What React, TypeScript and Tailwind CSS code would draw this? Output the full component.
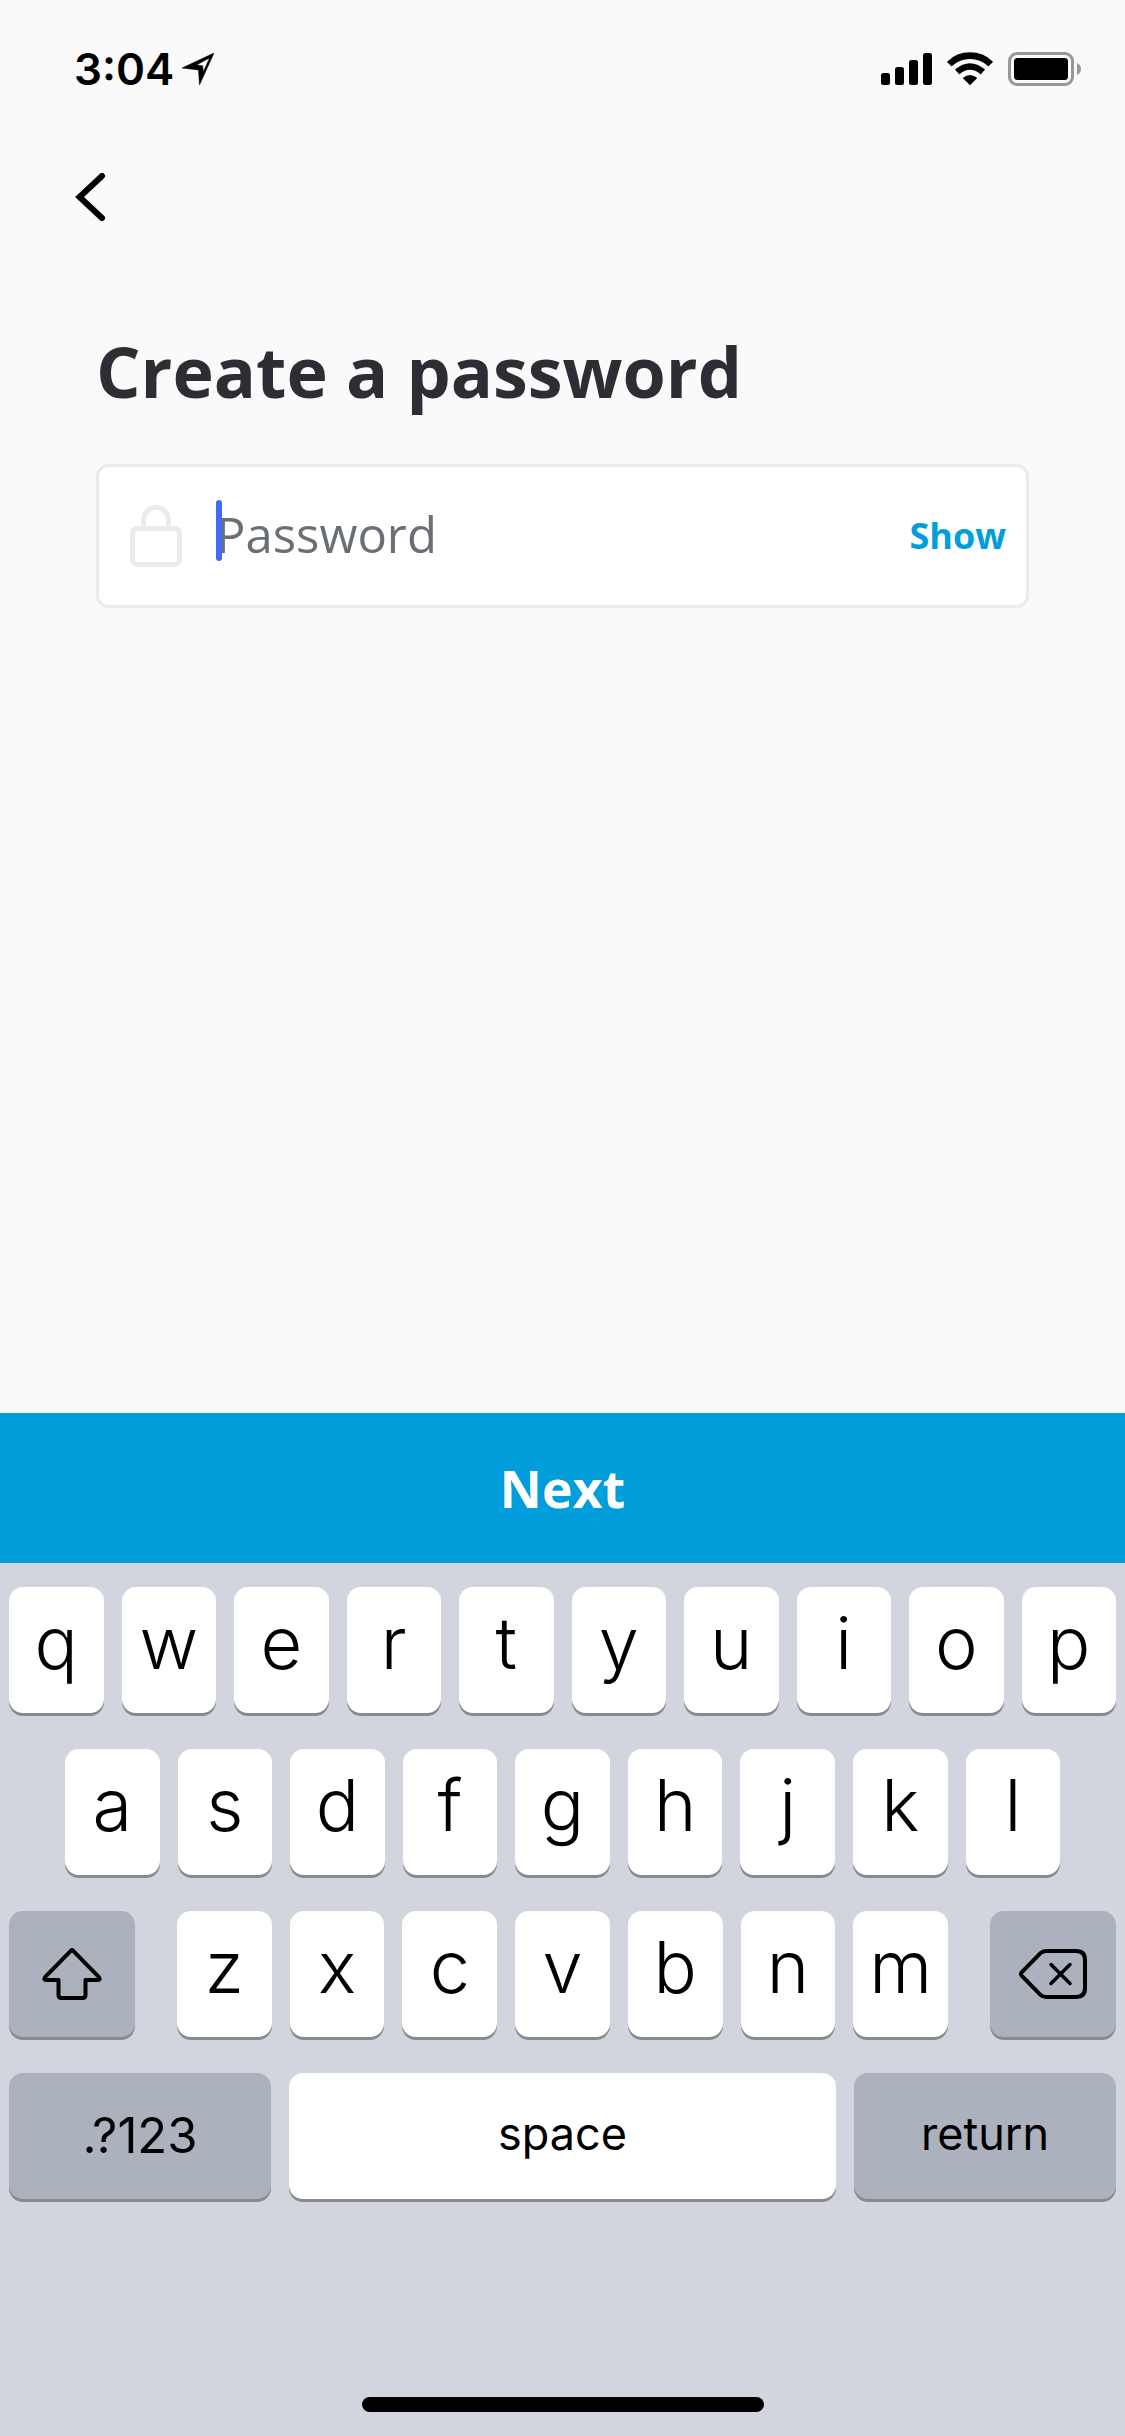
import { useState } from "react";
import type { ReactNode } from "react";

function LocationArrow() {
  return (
    <svg className="h-8 w-8" viewBox="0 0 32 32" aria-hidden="true">
      <path
        fillRule="evenodd"
        d="M32 0L17.5 32L16.5 17L0 15ZM27.5 5L14.5 12L20.5 12.7L21.5 18.5Z"
        fill="#000"
        stroke="#000"
        strokeWidth="0.5"
      />
    </svg>
  );
}

function SignalBars() {
  return (
    <svg className="h-9 w-[51px]" viewBox="0 0 51 36" aria-hidden="true">
      <rect x="0" y="22" width="9" height="12" rx="2.5" />
      <rect x="14" y="16" width="9" height="18" rx="2.5" />
      <rect x="28" y="9" width="9" height="25" rx="2.5" />
      <rect x="42" y="2" width="9" height="32" rx="2.5" />
    </svg>
  );
}

function Wifi() {
  return (
    <svg className="h-9 w-[46px]" viewBox="0 0 46 36" aria-hidden="true">
      <path d="M23 34.2L16.2 27.4Q15.9 27 16.3 26.6Q23 21.4 29.7 26.6Q30.1 27 29.8 27.4Z" />
      <path d="M8.3 19Q7.9 18.6 8.3 18.2Q23 6.2 37.7 18.2Q38.1 18.6 37.7 19L34 22.9Q33.6 23.3 33.2 23Q23 14.6 12.8 23Q12.4 23.3 12 22.9Z" />
      <path d="M0.3 11.2Q-0.1 10.8 0.3 10.4Q9.5 1.2 23 1.2Q36.5 1.2 45.7 10.4Q46.1 10.8 45.7 11.2L41.8 15Q41.4 15.4 41 15Q33.3 7.9 23 7.9Q12.7 7.9 5 15Q4.6 15.4 4.2 15Z" />
    </svg>
  );
}

function Battery() {
  return (
    <svg className="h-9 w-[74px]" viewBox="0 0 74 36" aria-hidden="true">
      <rect x="1.5" y="2.5" width="63" height="31" rx="7.5" fill="none" stroke="#979797" strokeWidth="3" />
      <rect x="6" y="7" width="54" height="22" rx="3.5" />
      <path d="M69 12Q73 14 73 18Q73 22 69 24Z" fill="#979797" />
    </svg>
  );
}

function Lock() {
  return (
    <svg className="h-[62px] w-[52px] shrink-0" viewBox="0 0 52 62" fill="none" stroke="#e8ecec" strokeWidth="5" aria-hidden="true">
      <rect x="2.5" y="23.5" width="47" height="36" rx="5" />
      <path d="M13.5 23.5V16C13.5 7.5 19 2.5 26 2.5S38.5 7.5 38.5 16V23.5" />
    </svg>
  );
}

function Shift() {
  return (
    <svg className="h-[52px] w-[60px]" viewBox="0 0 60 52" fill="none" stroke="#000" strokeWidth="4" strokeLinejoin="round" aria-hidden="true">
      <path d="M28.8 2.8Q30 1.6 31.2 2.8L57 29.2Q58.6 32 56 32H43.5V47Q43.5 50 40.5 50H19.5Q16.5 50 16.5 47V32H4Q1.4 32 3 29.2Z" />
    </svg>
  );
}

function Backspace() {
  return (
    <svg className="h-[50px] w-[68px]" viewBox="0 0 68 50" fill="none" stroke="#000" strokeWidth="4" strokeLinecap="round" strokeLinejoin="round" aria-hidden="true">
      <path d="M2.6 26.6Q1.4 25 2.6 23.4L21.5 4.2Q23.7 2 27 2H57Q66 2 66 11V39Q66 48 57 48H27Q23.7 48 21.5 45.8Z" />
      <path d="M32 15.5L51 34.5M51 15.5L32 34.5" strokeWidth="3.5" />
    </svg>
  );
}

const keyBase =
  "flex h-[126px] items-center justify-center rounded-[14px] shadow-[0_3px_0_#898a8d] text-black";

function LetterKey({ letter, onPress }: { letter: string; onPress: (l: string) => void }) {
  return (
    <button
      type="button"
      onClick={() => onPress(letter)}
      className={`${keyBase} min-w-0 flex-1 bg-white pb-3.5 text-[72px] leading-none font-light`}
    >
      {letter}
    </button>
  );
}

function SideKey({ label, className, onPress, children }: { label: string; className: string; onPress?: () => void; children: ReactNode }) {
  return (
    <button type="button" aria-label={label} onClick={onPress} className={`${keyBase} shrink-0 bg-[#abb1bd] ${className}`}>
      {children}
    </button>
  );
}

export default function App() {
  const [password, setPassword] = useState("");
  const [visible, setVisible] = useState(false);
  const press = (l: string) => setPassword((p) => p + l);
  const keys = (letters: string) =>
    letters.split("").map((l) => <LetterKey key={l} letter={l} onPress={press} />);

  return (
    <div className="flex min-h-screen flex-col bg-[#fafafa] font-['Inter',sans-serif]">
      <header>
        <div className="flex items-center justify-between pt-[51px] pr-[43px] pl-[74px]">
          <div className="flex items-center gap-2">
            <span className="text-[44px] leading-9 font-semibold text-black">3:04</span>
            <LocationArrow />
          </div>
          <div className="flex items-center gap-[15px]">
            <SignalBars />
            <Wifi />
            <Battery />
          </div>
        </div>
        <button type="button" aria-label="Back" className="mt-[86px] ml-[75px] block">
          <svg className="h-12 w-8" viewBox="0 0 32 48" fill="none" stroke="#000" strokeWidth="6" strokeLinecap="round" aria-hidden="true">
            <path d="M27 3L4.5 24L27 45" />
          </svg>
        </button>
      </header>

      <main className="flex-1 px-24 pt-[105px] font-['Open_Sans',sans-serif]">
        <h1 className="text-[70px] leading-[90px] font-bold text-[#2d2e33]">Create a password</h1>
        <div className="mt-12 flex h-36 items-center rounded-xl border-3 border-[#e8ecec] bg-white pr-5 pl-[31px]">
          <Lock />
          <div className="relative ml-[34px] min-w-0 flex-1">
            <input
              type={visible ? "text" : "password"}
              aria-label="Password"
              placeholder="Password"
              value={password}
              onChange={(e) => setPassword(e.target.value)}
              className="block h-16 w-full bg-transparent pb-0.5 text-[49px] text-black outline-none placeholder:text-[#6a6f75]"
            />
            {password === "" && (
              <span className="absolute -top-1 left-0 h-[61px] w-1.5 rounded-full bg-[#426bf5]" />
            )}
          </div>
          <button type="button" onClick={() => setVisible(!visible)} className="text-[36px] font-bold text-[#009fdb]">
            Show
          </button>
        </div>
      </main>

      <button type="button" className="h-[150px] w-full bg-[#009fdb] font-['Open_Sans',sans-serif] text-[52px] font-bold text-white">
        Next
      </button>

      <section aria-label="Keyboard" className="flex flex-col gap-9 bg-[#d2d5dd] pt-6 pb-6">
        <div className="flex gap-[18px] px-[9px]">{keys("qwertyuiop")}</div>
        <div className="flex gap-[18px] px-[65px]">{keys("asdfghjkl")}</div>
        <div className="flex gap-[42px] px-[9px]">
          <SideKey label="Shift" className="w-[126px]">
            <Shift />
          </SideKey>
          <div className="flex min-w-0 flex-1 gap-[18px]">{keys("zxcvbnm")}</div>
          <SideKey label="Delete" className="w-[126px]" onPress={() => setPassword((p) => p.slice(0, -1))}>
            <Backspace />
          </SideKey>
        </div>
        <div className="flex gap-[18px] px-[9px]">
          <SideKey label=".?123" className="w-[262px] text-[49px]">
            .?123
          </SideKey>
          <button type="button" onClick={() => press(" ")} className={`${keyBase} min-w-0 flex-1 bg-white pb-1 text-[45px]`}>
            space
          </button>
          <SideKey label="return" className="w-[262px] pb-1 text-[45px]">
            return
          </SideKey>
        </div>
        <div className="mx-auto mt-[162px] h-[15px] w-[402px] rounded-full bg-black" />
      </section>
    </div>
  );
}
